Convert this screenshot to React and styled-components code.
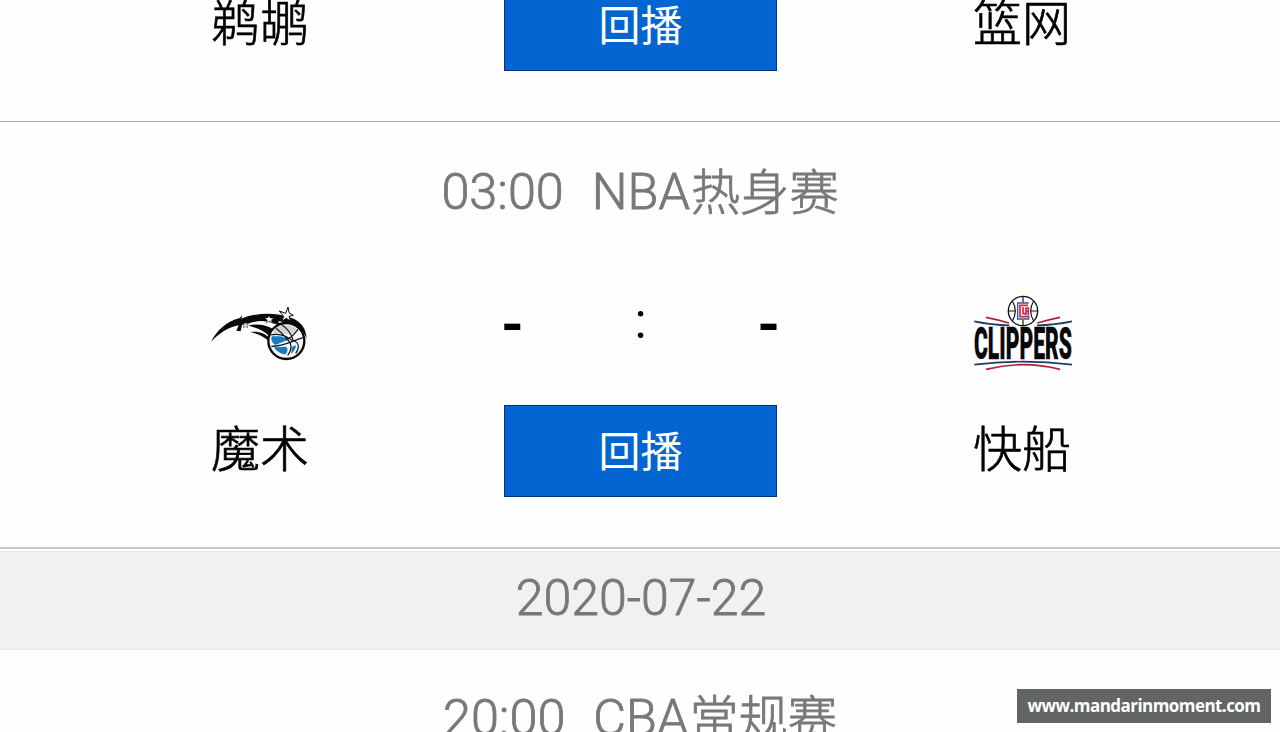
import React from 'react';
import styled, { createGlobalStyle } from 'styled-components';

const GlobalStyle = createGlobalStyle`
  * {
    box-sizing: border-box;
  }
  body {
    margin: 0;
    background: #fefefe;
    font-family: Roboto, 'Noto Sans CJK SC', sans-serif;
  }
`;

const Screen = styled.div`
  height: 732px;
  overflow: hidden;
  display: flex;
  flex-direction: column;
`;

const Match = styled.section`
  flex: none;
  height: ${props => props.$height}px;
  overflow: hidden;
  display: flex;
  flex-direction: column;
  justify-content: ${props => (props.$clipped ? 'flex-end' : 'flex-start')};
  border-bottom: ${props => props.$border || 0}px solid ${props => (props.$border === 2 ? '#c3c6cb' : '#adafb3')};
`;

const MatchHeader = styled.div`
  flex: none;
  display: flex;
  justify-content: center;
  margin-top: ${props => props.$top}px;
  height: 60px;
  line-height: 60px;
  font-size: 50.4px;
  font-weight: 300;
  color: #77787a;
  -webkit-text-stroke: 0.8px #77787a;
  white-space: nowrap;
`;

const Time = styled.span`
  margin-right: 28px;
`;

const Title = styled.span`
  font-size: 49.2px;
  margin-left: 1px;
  padding-top: 1px;
`;

const TeamsRow = styled.div`
  flex: none;
  display: grid;
  grid-template-columns: 200px 273px 202px;
  column-gap: 144px;
  padding-left: 160px;
  align-items: center;
  justify-items: center;
  height: ${props => props.$height}px;
  margin-top: ${props => props.$top || 0}px;
  margin-bottom: ${props => props.$bottom || 0}px;
`;

const Score = styled.div`
  width: 100%;
  display: flex;
  justify-content: space-between;
  align-items: flex-start;
  padding-bottom: 17px;
  color: #000;
`;

const Points = styled.span`
  margin: 0 -3px;
  font-size: 58px;
  font-weight: 700;
  line-height: 55px;
`;

const Colon = styled.span`
  font-size: 50px;
  line-height: 49px;
`;

const TeamName = styled.div`
  font-size: 49px;
  line-height: 60px;
  font-weight: 300;
  color: #000;
  -webkit-text-stroke: 0.7px #000;
  padding-bottom: 1px;
`;

const ReplayButton = styled.button`
  width: 273px;
  height: 92px;
  padding: 4px 0 0;
  border: 1px solid #02307c;
  background: #0265d2;
  color: #fff;
  font-family: inherit;
  font-size: 42px;
  font-weight: 400;
  line-height: 60px;
`;

const DateBar = styled.div`
  flex: none;
  height: 99px;
  margin-top: 2px;
  padding: 0 0 5px 2px;
  display: flex;
  align-items: center;
  justify-content: center;
  background: #f0f1f3;
  border-top: 1px solid #e7e8ea;
  border-bottom: 1px solid #e4e6e9;
  font-size: 50px;
  font-weight: 300;
  color: #77787a;
  -webkit-text-stroke: 0.8px #77787a;
`;

const Watermark = styled.div`
  position: fixed;
  right: 9px;
  bottom: 9px;
  width: 254px;
  height: 34px;
  line-height: 33px;
  text-align: center;
  background: #636564;
  color: #fff;
  font-family: 'Open Sans', sans-serif;
  font-size: 17px;
  font-weight: 700;
  letter-spacing: -0.55px;
`;

const MagicLogo = () => <svg width="130" height="95" viewBox="-15 -15 390 285">
  <path d="M33 156C49 122 80 94 119 84L127 76L124 86C170 66 230 68 260 80C292 86 318 105 320 146C308 112 276 98 238 94L222 101C190 88 164 94 143 101L136 98L126 105L122 124L109 122L116 106C84 112 54 132 33 156Z" fill="#0b0809" />
  <path d="M145 107C175 97 213 108 226 123L208 139C191 121 168 113 145 107ZM151 126C175 123 198 130 209 146L203 151C187 136 170 131 151 126Z" fill="#0b0809" />
  <path d="M199 94C213 88 233 95 249 104L231 104C220 98 210 96 199 94Z" fill="#0b0809" />
  <circle cx="259" cy="153" r="54" fill="#f5f7f8" stroke="#0b0809" strokeWidth="7" />
  <path d="M224 117C244 101 278 101 294 122L275 136C256 129 238 131 219 131Z" fill="#d2d3d7" />
  <path d="M215 139L239 139C250 140 258 144 264 149L226 165C216 159 212 150 215 139ZM222 172L258 170C265 176 263 184 257 193C244 193 229 185 222 172ZM276 170L288 166C287 178 281 186 273 192Z" fill="#167bc2" />
  <path d="M211 135C242 128 265 141 280 154M214 169C254 169 281 150 310 143M263 196C278 177 274 159 264 150C252 136 240 124 228 115M287 190C299 174 298 156 280 153M258 150C272 144 284 132 294 118M245 104C258 112 272 124 280 152" fill="none" stroke="#171416" strokeWidth="3.5" />
  <path d="M264 51L267 68L280 76L267 79L272 94L259 85L246 94L251 79L238 63L257 70Z" fill="#fff" stroke="#0b0809" strokeWidth="3" />
  <path d="M207 77L211 84L221 84L214 91L218 99L208 94L199 99L202 90L194 84L204 83ZM136 98L139 103L145 103L141 107L143 113L136 109L130 113L132 106L127 102L134 103Z" fill="#fff" stroke="#0b0809" strokeWidth="1.5" />
</svg>;

const ClippersLogo = () => <svg width="130" height="95" viewBox="-9 0 390 285">
  <g fill="none" strokeWidth="5">
    <path d="M78 97Q109 103 147 114M232 114Q270 103 300 97M78 253Q189 225 300 253" stroke="#b51f3b" />
    <path d="M43 109Q94 120 148 121M231 121Q285 120 336 109M43 239Q189 221 336 239" stroke="#1c3e60" />
  </g>
  <circle cx="189" cy="78" r="44" fill="#fff" stroke="#111" strokeWidth="4" />
  <path d="M189 34V53M189 104V122M145 78H164M214 78H233M157 48Q175 78 157 108M221 48Q203 78 221 108" fill="none" stroke="#111" strokeWidth="3.5" />
  <path d="M206 54H173V102H206V92" fill="none" stroke="#245baa" strokeWidth="4" />
  <path d="M204 61H180V95H206M189 66V86H196M198 91V69H205V91M198 79H205" fill="none" stroke="#d3264b" strokeWidth="5" />
  <text
    transform="translate(42 223) scale(.425 1)"
    textLength="692"
    lengthAdjust="spacingAndGlyphs"
    fontFamily="Roboto, sans-serif"
    fontSize="131"
    fontWeight="900"
    fill="#080808"
    stroke="#080808"
    strokeWidth="1"
  >CLIPPERS</text>
</svg>;

const TeamNames = ({ home, away, bottom }) => <TeamsRow $height={92} $bottom={bottom}>
  <TeamName>{home}</TeamName>
  <ReplayButton>回播</ReplayButton>
  <TeamName>{away}</TeamName>
</TeamsRow>;

const Header = ({ time, league, title, top }) => <MatchHeader $top={top}>
  <Time>{time}</Time>
  <span>{league}</span>
  <Title>{title}</Title>
</MatchHeader>;

export default () => <Screen>
  <GlobalStyle />
  <Match $height={122} $border={1} $clipped>
    <TeamNames home="鹈鹕" away="篮网" bottom={50} />
  </Match>
  <Match $height={427} $border={2}>
    <Header time="03:00" league="NBA" title="热身赛" top={40} />
    <TeamsRow $height={95} $top={63} $bottom={25}>
      <MagicLogo />
      <Score>
        <Points>-</Points>
        <Colon>:</Colon>
        <Points>-</Points>
      </Score>
      <ClippersLogo />
    </TeamsRow>
    <TeamNames home="魔术" away="快船" />
  </Match>
  <DateBar>2020-07-22</DateBar>
  <Match $height={82}>
    <Header time="20:00" league="CBA" title="常规赛" top={38} />
  </Match>
  <Watermark>www.mandarinmoment.com</Watermark>
</Screen>;
